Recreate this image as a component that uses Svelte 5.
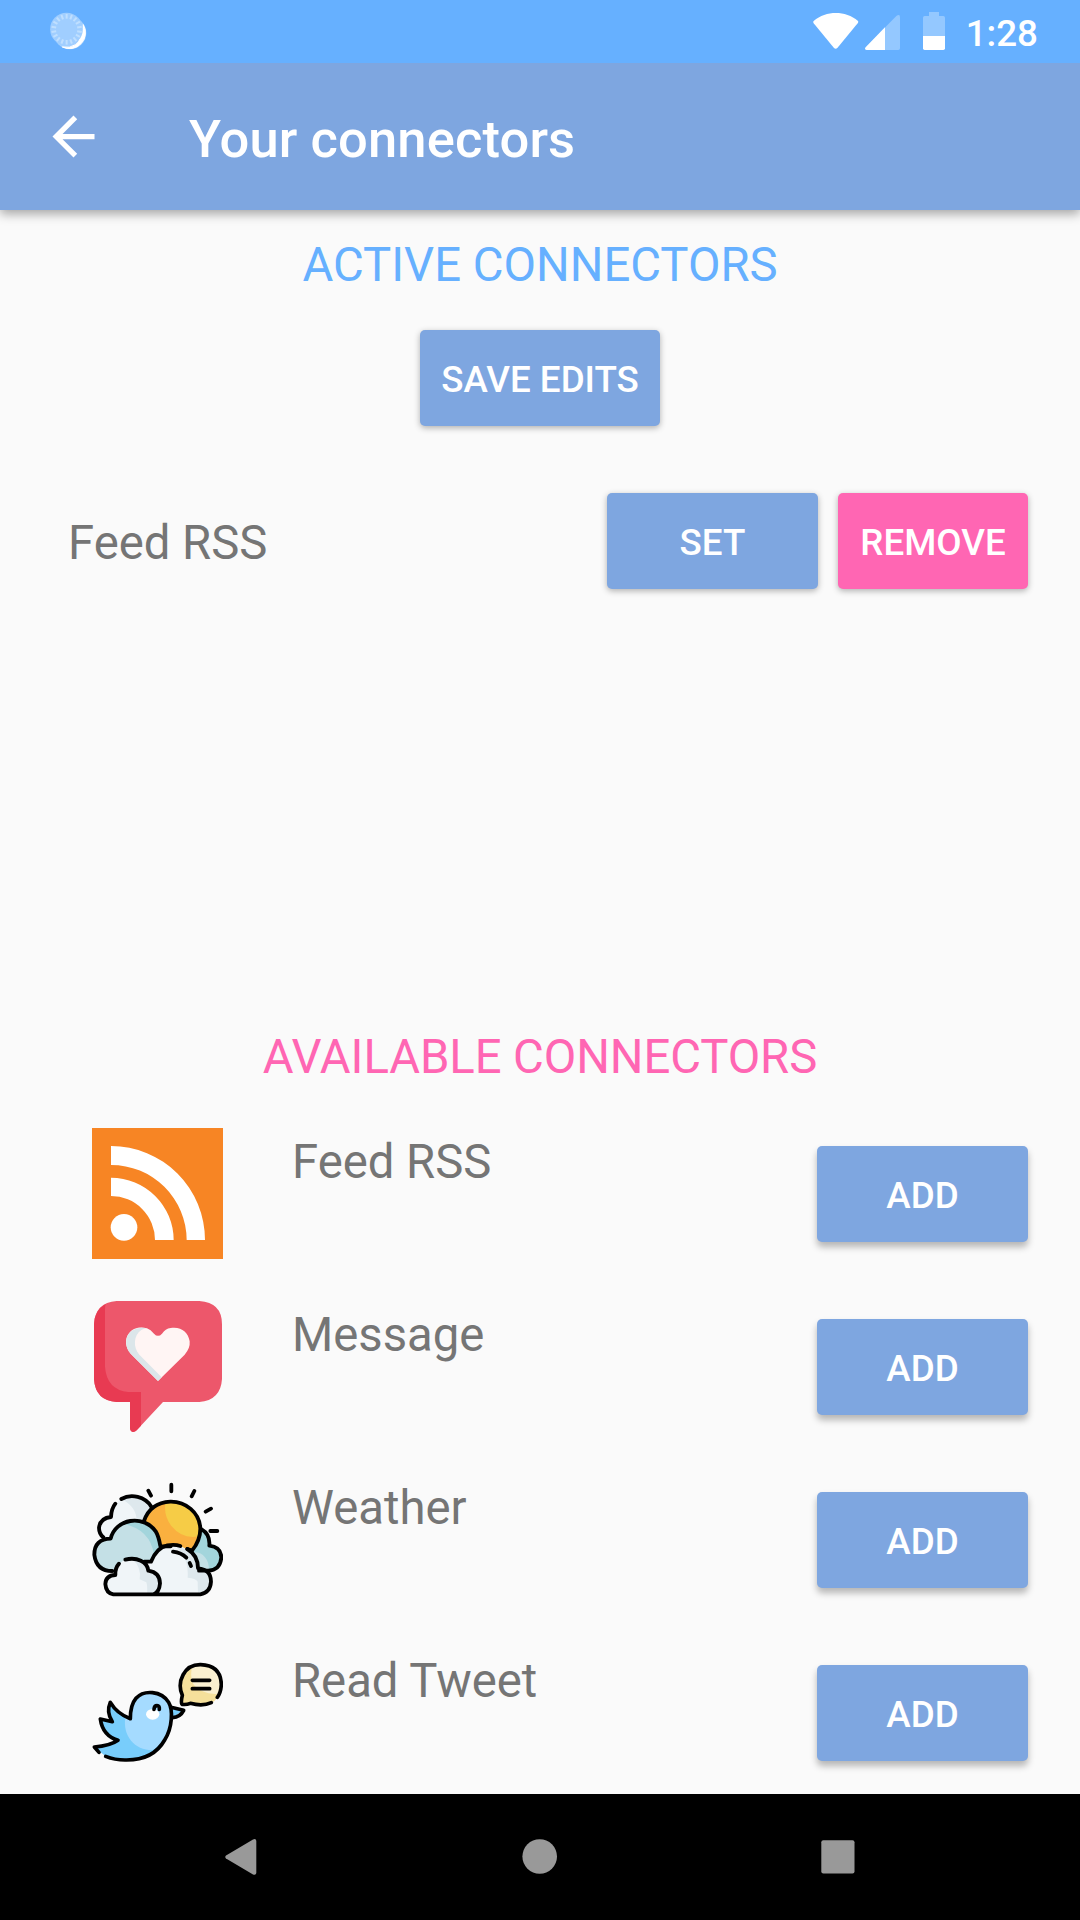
<script>
  const available = ['Feed RSS', 'Message', 'Weather', 'Read Tweet'];
  const ticks = Array.from({ length: 18 }, (_, i) => i * 20);
</script>

<div class="screen">
  <header class="status">
    <svg class="sync" viewBox="50 30 130 130">
      <circle cx="119" cy="99" r="49" fill="#a3d0ff" />
      <path d="M159 74A48 48 0 0 1 96 141Q118 146 136 134T159 74Z" fill="#fff" stroke="#fff" stroke-width="3" />
      <circle cx="108.500" cy="87.500" r="49" fill="#a0ceff" />
      {#each ticks as angle}
        <path d="M109 42V56" transform="rotate({angle} 109 88)" stroke="#bfdfff" stroke-width="6" />
      {/each}
    </svg>
    <div class="indicators">
      <svg class="wifi" viewBox="97 36 138 114"><path d="M99 63C137 31 194 31 232 63Q234 66 231 70L170 144Q165 149 160 144L99 70Q96 66 99 63Z" fill="#fff" /></svg>
      <svg class="signal" viewBox="255 36 105 114"><path d="M257 142L349 48Q360 40 360 52V145Q360 150 355 150H260Q252 149 257 142Z" fill="#94c8ff" /><path d="M315 82V150H260Q252 149 257 142Z" fill="#fff" /></svg>
      <svg class="battery" viewBox="429 36 66 114"><path d="M447 36H477V48H490Q495 48 495 53V108H429V53Q429 48 434 48H447Z" fill="#94c8ff" /><path d="M429 108H495V145Q495 150 490 150H434Q429 150 429 145Z" fill="#fff" /></svg>
      <span class="clock">1:28</span>
    </div>
  </header>

  <div class="toolbar">
    <svg class="back" viewBox="0 0 24 24"><path d="M20 11H7.83l5.59-5.59L12 4l-8 8 8 8 1.41-1.41L7.83 13H20v-2z" fill="#fff" /></svg>
    <h1>Your connectors</h1>
  </div>

  <main>
    <h2 class="active-title">ACTIVE CONNECTORS</h2>
    <button class="save">SAVE EDITS</button>
    <div class="active-list">
      <div class="active-row">
        <span class="name">Feed RSS</span>
        <button class="wide">SET</button>
        <button class="remove">REMOVE</button>
      </div>
    </div>

    <h2 class="available-title">AVAILABLE CONNECTORS</h2>
    <ul>
      {#each available as name, i}
        <li>
          {#if i === 0}
            <svg class="icon" viewBox="36 54 393 393">
              <path d="M36 54H429V447H36Z" fill="#f78524" />
              <circle cx="132" cy="352" r="40" fill="#fff" />
              <path d="M93 108A282 282 0 0 1 375 390H320A226 226 0 0 0 93 165ZM93 203A188 188 0 0 1 281 390H225A132 132 0 0 0 93 258Z" fill="#fff" />
            </svg>
          {:else if i === 1}
            <svg class="icon" viewBox="36 48 393 393">
              <path d="M110 48H358Q426 52 426 118V282Q422 346 358 351H249L170 436Q163 443 155 440Q150 437 150 430V351H110Q46 347 42 282V118Q45 53 110 48Z" fill="#ed576b" />
              <path d="M77 57Q43 76 42 118V282Q46 347 110 351H150V430Q151 440 160 441Q167 440 170 436L183 422V321H145Q80 314 75 245V75Q75 64 77 57Z" fill="#e83a52" />
              <path d="M234 288L152 206C136 188 133 163 147 145C161 127 183 125 201 130Q212 134 222 146Q234 159 246 146Q256 131 272 129C303 124 325 141 329 169Q331 190 314 209Z" fill="#fff5f4" />
              <path d="M201 130Q176 124 155 137C134 153 133 185 152 206L234 288L245 277L178 209C159 188 160 151 184 135Q192 130 201 130Z" fill="#dce6ea" />
            </svg>
          {:else if i === 2}
            <svg class="icon" viewBox="36 12 393 393" stroke-linecap="round" stroke-linejoin="round">
              <path d="M94 204H72Q52 190 58 164Q65 141 93 141Q93 118 106 101L124 87C154 70 195 80 214 112L196 158Z" fill="#f0f5f8" />
              <path d="M124 87C154 70 195 80 214 112L196 154L170 157Q172 111 124 87Z" fill="#dee8ed" />
              <path d="M365 178Q391 191 388 227Q422 230 424 263Q420 301 386 302H355L330 250Z" fill="#a3d5dc" />
              <path d="M340 247Q362 245 375 262Q389 279 386 301H357Z" fill="#c4e0e6" />
              <circle cx="275" cy="181" r="85" fill="#fab03f" />
              <path d="M256 100Q305 87 338 123Q364 155 357 199Q306 208 275 169Q251 140 256 100Z" fill="#f6cc46" />
              <path d="M97 303Q54 308 43 266C38 231 57 206 92 206Q100 164 151 155Q213 151 231 202L239 228L213 276L160 268Z" fill="#c4e0e6" />
              <path d="M132 162C186 145 222 167 234 204L239 228L222 254Q211 179 132 162Z" fill="#a3d5dc" />
              <path d="M204 372V292L213 275Q236 226 279 226Q342 229 354 295Q389 298 393 334Q391 369 361 373Z" fill="#f0f5f8" />
              <path d="M286 228Q345 238 355 295Q394 299 393 337Q388 371 354 373L353 335Q348 325 323 323Q327 262 286 228Z" fill="#dee8ed" />
              <path d="M99 373Q77 366 76 342Q77 316 106 315Q110 283 131 271C162 259 199 274 205 303Q239 310 240 340Q237 373 216 373Z" fill="#f0f5f8" />
              <path d="M157 268Q198 269 205 303Q238 309 240 340Q236 373 201 373Q203 349 199 337L179 328Q185 292 157 268Z" fill="#dee8ed" />
              <g fill="none" stroke="#000" stroke-width="11.500">
                <path d="M106 101Q94 116 93 141Q61 144 57 173Q57 191 70 202M124 87C154 70 195 80 214 110" />
                <path d="M241 228Q236 199 227 184C190 132 106 146 92 206Q43 207 43 254Q49 303 97 303" />
                <path d="M192 153Q211 98 271 95C316 94 359 127 361 176Q361 211 336 242L322 237M245 229H272" />
                <path d="M365 178Q391 193 388 227Q423 231 424 262Q421 300 385 302H357" />
                <path d="M193 275H213Q230 233 262 226Q285 222 301 228M322 237Q354 256 354 295Q393 298 393 335Q391 368 361 373H100Q78 369 76 342Q77 316 106 315Q105 294 117 281M136 269C171 260 202 276 205 302Q239 307 240 340Q238 366 221 373" />
                <path d="M279 245Q304 248 319 263M329 279L333 288" />
                <path d="M205 62L213 77M274 44V64M343 63L335 79M377 125L393 116M391 183H412" />
              </g>
            </svg>
          {:else}
            <svg class="icon" viewBox="36 -9 393 393" stroke-linecap="round" stroke-linejoin="round">
              <path d="M75 317L43 292L114 271Q77 261 61 206L96 215Q78 187 91 157Q112 192 151 206Q149 128 213 128Q271 130 273 185C282 277 222 329 135 330Q106 329 75 317Z" fill="#78cdfb" />
              <path d="M151 206Q149 128 213 128Q271 130 273 185C278 244 252 278 217 301C164 300 127 258 136 201Z" fill="#a5dbff" />
              <path d="M273 169L311 181L276 203Z" fill="#78cdfb" />
              <ellipse cx="218" cy="193" rx="20" ry="16" fill="#fff" />
              <path d="M305 162L307 131C295 94 310 44 362 43Q423 47 423 108Q414 164 374 163Z" fill="#f5e09b" />
              <path d="M337 49Q387 30 415 73Q430 105 413 133Q353 130 337 97Q330 72 337 49Z" fill="#faf0d0" />
              <g fill="none" stroke="#000" stroke-width="11">
                <path d="M77 319Q107 331 140 330Q220 330 254 270C278 232 279 179 266 157C244 121 191 119 168 145Q151 165 151 206Q111 191 91 157Q78 187 97 215L61 207Q68 257 114 271Q90 288 43 291L57 307" />
                <path d="M273 172L311 181Q301 201 277 203M222 178Q223 167 231 167T238 178" />
                <path d="M394 158Q368 170 331 160Q319 165 306 163Q302 157 307 136C289 95 313 43 362 44Q422 46 424 103Q423 128 412 142" />
                <path d="M337 91H389M337 116H389" />
              </g>
            </svg>
          {/if}
          <span class="name">{name}</span>
          <button class="wide">ADD</button>
        </li>
      {/each}
    </ul>
  </main>

  <nav>
    <svg viewBox="0 0 60 60"><path d="M15 28.500Q13.500 30 15 31.500L42 47.500Q45 48.500 45.300 46V14Q45 11 42 12.500Z" fill="#999" /></svg>
    <svg viewBox="0 0 60 60"><circle cx="29.700" cy="29.500" r="17.300" fill="#999" /></svg>
    <svg viewBox="0 0 60 60"><rect x="13.300" y="13.300" width="33.200" height="33.200" rx="2" fill="#999" /></svg>
  </nav>
</div>

<style>
  :global(body) { margin: 0; }
  .screen { width: 1080px; height: 1920px; display: flex; flex-direction: column; background: #fafafa; font-family: Roboto, sans-serif; color: #757575; overflow: hidden; }
  svg { display: block; flex: none; }
  .status { box-sizing: border-box; height: 63px; flex: none; position: relative; z-index: 2; background: #66b0ff; display: flex; justify-content: space-between; padding: 10px 42px 0 46.500px; }
  .sync { width: 43.3px; height: 43.3px; }
  .indicators { display: flex; align-items: flex-start; color: #fff; }
  .wifi { width: 46px; height: 38px; margin-top: 2px; }
  .signal { width: 35px; height: 38px; margin: 2px 23px 0 6px; }
  .battery { width: 22px; height: 38px; margin-top: 2px; }
  .clock { font-size: 36.75px; font-weight: 500; line-height: 47px; margin-left: 21px; }
  .toolbar { box-sizing: border-box; height: 147px; flex: none; position: relative; z-index: 1; display: flex; align-items: center; background: #7ea6e0; color: #fff; padding-left: 42px; box-shadow: 0 4px 10px rgba(0, 0, 0, 0.34); }
  .back { width: 63px; height: 63px; }
  h1 { margin: 5px 0 0 84px; font-size: 52.5px; font-weight: 500; line-height: 64px; letter-spacing: 0.12px; }
  main { flex: 1; min-height: 0; display: flex; flex-direction: column; align-items: center; padding-top: 23px; }
  h2 { margin: 0; flex: none; font-size: 47.25px; line-height: 64px; font-weight: 400; }
  .active-title { color: #66b0ff; }
  .available-title { color: #ff66b3; letter-spacing: -0.08px; }
  button { box-sizing: border-box; flex: none; height: 96px; padding: 3px 0 0; border: 0; border-radius: 5px; background: #7ea6e0; color: #fff; font: 500 36.75px/48px Roboto, sans-serif; box-shadow: 0 2px 6px rgba(0, 0, 0, 0.3); }
  .save { width: 240px; margin-top: 33px; }
  .wide { width: 211px; }
  .remove { width: 190px; margin-left: 20px; background: #ff66b3; }
  .active-list { box-sizing: border-box; flex: none; align-self: stretch; height: 599px; padding: 67px 52px 0 68px; }
  .active-row { display: flex; align-items: center; }
  .name { flex: 1; font-size: 47.25px; line-height: 64px; }
  .active-row .name { padding-top: 4px; }
  ul { align-self: stretch; flex: none; display: flex; flex-direction: column; gap: 42px; list-style: none; margin: 0; padding: 39px 52px 0 92px; }
  li { height: 131px; display: flex; align-items: center; }
  .icon { width: 131px; height: 131px; margin-right: 69px; }
  li .name { align-self: flex-start; padding-top: 2px; }
  li .wide { margin-top: 1px; padding-top: 4px; box-shadow: 0 5px 7px rgba(0, 0, 0, 0.28); }
  nav { box-sizing: border-box; height: 126px; flex: none; background: #000; display: flex; justify-content: space-between; align-items: center; padding: 0 212px 0 211px; }
  nav svg { width: 60px; height: 60px; }
</style>
